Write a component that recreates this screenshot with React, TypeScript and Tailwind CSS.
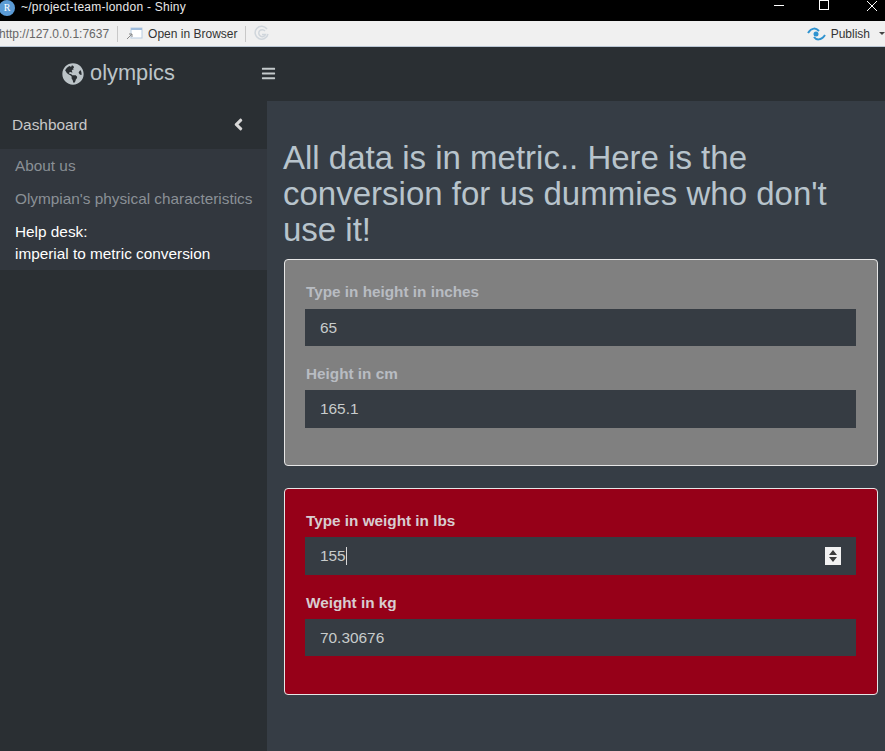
import { FaAngleLeft, FaBars, FaGlobeAmericas } from 'react-icons/fa'

type FieldProps = {
  label: string
  value: string
  labelClass: string
  spinner?: boolean
  short?: boolean
}

function Field({ label, value, labelClass, spinner, short }: FieldProps) {
  return (
    <div className="flex flex-col">
      <label className={`ml-px h-[20px] text-[15.3px] leading-[20px] font-bold ${labelClass}`}>{label}</label>
      <div
        className={`flex items-center justify-between bg-[#363c43] pr-[15px] pl-[15px] text-[15.4px] text-[#c8cccc] ${
          short ? 'h-[37px]' : 'h-[38px]'
        }`}
      >
        <span className="flex items-center">
          {value}
          {spinner && <span className="h-[18px] w-px bg-[#d8d8d8]" />}
        </span>
        {spinner && (
          <span className="flex h-[18px] w-[16px] items-center justify-center bg-[#f2f2f2]">
            <svg width="10" height="14" viewBox="0 0 10 14">
              <path d="M5 1 L9 6 H1 Z M1 8 H9 L5 13 Z" fill="#3c3c3c" />
            </svg>
          </span>
        )}
      </div>
    </div>
  )
}

function WindowBar() {
  return (
    <div className="flex h-[21px] items-center justify-between bg-black text-white">
      <div className="flex items-center">
        <span className="-mt-[6px] -ml-[1px] flex h-[16px] w-[16px] items-center justify-center rounded-full bg-[#5b9bd5] font-['Liberation_Serif',serif] text-[10px] text-white">
          R
        </span>
        <span className="-mt-[7px] ml-[6px] text-[12px] tracking-[0.25px] text-[#e8e8e8]">~/project-team-london - Shiny</span>
      </div>
      <div className="flex items-center">
        <svg width="11" height="11" viewBox="0 0 11 11" className="-mt-[11px] mr-[34px]">
          <path d="M0 5.5 H10" stroke="#fff" strokeWidth="1" />
        </svg>
        <svg width="10" height="10" viewBox="0 0 10 10" className="-mt-[11px] mr-[37px]">
          <rect x="0.5" y="0.5" width="9" height="9" fill="none" stroke="#fff" />
        </svg>
        <svg width="12" height="12" viewBox="0 0 12 12" className="-mt-[9px] mr-[7px]">
          <path d="M1 1 L11 11 M11 1 L1 11" stroke="#fff" />
        </svg>
      </div>
    </div>
  )
}

function Toolbar() {
  return (
    <div className="flex h-[26px] items-center justify-between border-b border-[#b9c6d4] bg-[#f0f0f0] text-[12px] text-[#333]">
      <div className="flex items-center">
        <span className="-ml-[1px] text-[#666]">http://127.0.0.1:7637</span>
        <span className="mx-[8px] h-[16px] w-px bg-[#c8c8c8]" />
        <svg width="17" height="14" viewBox="0 0 17 14">
          <rect x="5" y="1" width="11" height="10" fill="#fff" stroke="#b8cbe0" />
          <rect x="5" y="1" width="11" height="2" fill="#9fbcdc" />
          <path d="M1 12 L6 7 M3 7 H6 V10" stroke="#8a8a8a" fill="none" />
        </svg>
        <span className="ml-[5px]">Open in Browser</span>
        <span className="mr-[7px] ml-[8px] h-[16px] w-px bg-[#c8c8c8]" />
        <svg width="17" height="17" viewBox="0 0 17 17">
          <path d="M14 4 A6.5 6.5 0 1 0 15 9" fill="none" stroke="#d0d6dc" strokeWidth="1.5" />
          <path d="M12 6 A3.5 3.5 0 1 0 12.5 9.5 H9" fill="none" stroke="#d0d6dc" strokeWidth="1.5" />
        </svg>
      </div>
      <div className="flex items-center">
        <svg width="19" height="14" viewBox="0 0 19 14">
          <path d="M1 6 C5 0 9 1 12 4 M18 8 C14 14 9 13 7 10" fill="none" stroke="#2f93d0" strokeWidth="2" />
          <circle cx="9" cy="7" r="2.5" fill="#2f93d0" />
        </svg>
        <span className="ml-[5px]">Publish</span>
        <span className="ml-[9px] h-0 w-0 border-x-[3px] border-t-[3px] border-x-transparent border-t-[#444]" />
      </div>
    </div>
  )
}

export default function App() {
  return (
    <div className="flex h-[751px] w-[885px] flex-col overflow-hidden bg-[#363d45] font-['Liberation_Sans',Arial,sans-serif]">
      <WindowBar />
      <Toolbar />
      <div className="flex h-[54px] shrink-0 bg-[#2a2f33] pb-px">
        <div className="flex w-[237px] items-center justify-center text-[#bcc4c8]">
          <FaGlobeAmericas className="mr-[6px] text-[22px]" />
          <span className="text-[21.8px]">olympics</span>
        </div>
        <div className="flex items-center pl-[24px] text-[#c4cacc]">
          <FaBars className="text-[15px]" />
        </div>
      </div>
      <div className="flex min-h-0 flex-1">
        <aside className="w-[267px] shrink-0 bg-[#2a2f33]">
          <div className="flex h-[48px] items-center justify-between pr-[19px] pb-px pl-[12px] text-[15.4px] text-[#c8c8c8]">
            <span>Dashboard</span>
            <FaAngleLeft className="text-[19px] text-[#d8d8d8]" />
          </div>
          <nav className="flex h-[121px] flex-col bg-[#32373e] pt-[6px] pl-[15px] text-[15.35px] leading-[22px]">
            <a className="h-[33px] text-[#8a9096]">About us</a>
            <a className="h-[33px] text-[#8a9096]">Olympian's physical characteristics</a>
            <a className="text-white">
              Help desk:
              <br />
              imperial to metric conversion
            </a>
          </nav>
        </aside>
        <main className="min-w-0 flex-1 pt-[39px] pl-[17px]">
          <h1 className="w-[590px] -translate-x-px text-[33px] leading-[36px] text-[#b8c4cc]">
            All data is in metric.. Here is the conversion for us dummies who don't use it!
          </h1>
          <section className="mt-[11px] flex h-[207px] w-[594px] flex-col gap-[18px] rounded-[4px] border border-[#e6e6e6] bg-[#808080] pt-[22px] pr-[21px] pl-[20px]">
            <Field label="Type in height in inches" value="65" labelClass="mb-[7px] text-[#b8bcc2]" short />
            <Field label="Height in cm" value="165.1" labelClass="mb-[6px] text-[#b8bcc2]" />
          </section>
          <section className="mt-[22px] flex h-[207px] w-[594px] flex-col gap-[18px] rounded-[4px] border border-[#e6e6e6] bg-[#960018] pt-[22px] pr-[21px] pl-[20px]">
            <Field label="Type in weight in lbs" value="155" labelClass="mb-[6px] text-[#d8cdd0]" spinner />
            <Field label="Weight in kg" value="70.30676" labelClass="mb-[6px] text-[#d8cdd0]" short />
          </section>
        </main>
      </div>
    </div>
  )
}
